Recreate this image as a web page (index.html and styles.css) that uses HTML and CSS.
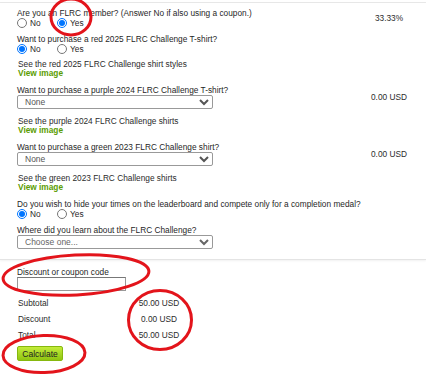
FILE: index.html
```html
<!DOCTYPE html>
<html lang="en">
<head>
    <meta charset="UTF-8">
    <title>FLRC Challenge Registration</title>
    <link rel="stylesheet" href="styles.css">
</head>
<body>
    <div class="page">
        <div class="options">
            <div class="field radio-field">
                <div class="field-main">
                    <div class="question">Are you an FLRC member? (Answer No if also using a coupon.)</div>
                    <div class="radios">
                        <label class="option"><input type="radio" name="member"> No</label>
                        <label class="option"><input type="radio" name="member" checked> Yes</label>
                    </div>
                </div>
                <div class="price">33.33%</div>
            </div>

            <div class="field radio-field">
                <div class="field-main">
                    <div class="question">Want to purchase a red 2025 FLRC Challenge T-shirt?</div>
                    <div class="radios">
                        <label class="option"><input type="radio" name="red" checked> No</label>
                        <label class="option"><input type="radio" name="red"> Yes</label>
                    </div>
                </div>
            </div>

            <div class="see">
                <div>See the red 2025 FLRC Challenge shirt styles</div>
                <a href="#" class="view">View image</a>
            </div>

            <div class="field select-field">
                <div class="field-main">
                    <div class="question">Want to purchase a purple 2024 FLRC Challenge T-shirt?</div>
                    <select><option>None</option></select>
                </div>
                <div class="price">0.00 USD</div>
            </div>

            <div class="see">
                <div>See the purple 2024 FLRC Challenge shirts</div>
                <a href="#" class="view">View image</a>
            </div>

            <div class="field select-field">
                <div class="field-main">
                    <div class="question">Want to purchase a green 2023 FLRC Challenge shirt?</div>
                    <select><option>None</option></select>
                </div>
                <div class="price">0.00 USD</div>
            </div>

            <div class="see">
                <div>See the green 2023 FLRC Challenge shirts</div>
                <a href="#" class="view">View image</a>
            </div>

            <div class="field radio-field">
                <div class="field-main">
                    <div class="question">Do you wish to hide your times on the leaderboard and compete only for a completion medal?</div>
                    <div class="radios">
                        <label class="option"><input type="radio" name="hide" checked> No</label>
                        <label class="option"><input type="radio" name="hide"> Yes</label>
                    </div>
                </div>
            </div>

            <div class="field">
                <div class="field-main">
                    <div class="question">Where did you learn about the FLRC Challenge?</div>
                    <select class="choose"><option>Choose one...</option></select>
                </div>
            </div>
        </div>

        <div class="summary">
            <div class="coupon">
                <div class="question">Discount or coupon code</div>
                <input type="text" class="coupon-input">
            </div>
            <div class="totals">
                <div>Subtotal</div><div class="amount">50.00 USD</div>
                <div>Discount</div><div class="amount">0.00 USD</div>
                <div>Total</div><div class="amount">50.00 USD</div>
            </div>
            <button class="calc">Calculate</button>
        </div>
    </div>

    <svg class="marks" width="426" height="375" viewBox="0 0 426 375">
        <ellipse cx="71" cy="17" rx="20" ry="18"/>
        <ellipse cx="76" cy="275" rx="73" ry="20" transform="rotate(-3 76 275)"/>
        <ellipse cx="160" cy="320" rx="31.5" ry="29.5"/>
        <ellipse cx="44" cy="354" rx="41" ry="18.5" transform="rotate(-2 44 354)"/>
    </svg>
</body>
</html>
```

FILE: styles.css
```css
body {
    margin: 0;
    font-family: "Liberation Sans", Arial, sans-serif;
    font-size: 8.3px;
    color: #2b2b2b;
    background: #fff;
}
.page {
    margin-top: 2px;
    border-top: 1px solid #e8e8e8;
}
.options {
    padding: 5px 11px 10px 17px;
    border-bottom: 1px solid #e4e4e4;
    box-shadow: 0 1px 2px rgba(0,0,0,0.06);
}
.field {
    display: flex;
    align-items: center;
}
.field-main {
    flex: 1;
}
.radio-field {
    margin-bottom: 6px;
}
.select-field {
    margin-bottom: 8px;
}
.question {
    line-height: 10px;
    color: #1f1f1f;
}
.radios {
    display: flex;
    line-height: 10px;
}
.option {
    display: flex;
    align-items: center;
    gap: 3px;
    width: 40px;
    color: #1f1f1f;
}
.option input {
    width: 10px;
    height: 10px;
    margin: 0;
}
.price {
    width: 52px;
    text-align: center;
}
.see {
    line-height: 9px;
    padding-left: 1px;
    margin-bottom: 7px;
}
.view {
    display: block;
    color: #5a9c00;
    font-weight: bold;
    text-decoration: none;
}
select {
    display: block;
    width: 196px;
    height: 14px;
    padding: 0 0 0 3px;
    font-family: inherit;
    font-size: 8.5px;
    color: #555;
    border: 1px solid #999;
    border-radius: 2px;
    background: #fff;
}
.choose {
    color: #666;
}
.summary {
    padding: 7px 17px 0 17px;
}
.coupon-input {
    display: block;
    width: 109px;
    height: 14px;
    box-sizing: border-box;
    margin: 0;
    border: 1px solid #999;
    border-top-color: #777;
}
.totals {
    display: grid;
    grid-template-columns: 105px 72px;
    line-height: 16px;
    margin-top: 4px;
    padding-left: 1px;
}
.amount {
    text-align: center;
}
.calc {
    margin-top: 3px;
    width: 46px;
    height: 15px;
    padding: 0;
    font-family: inherit;
    font-size: 8.5px;
    color: #222;
    background: linear-gradient(#c3ec3a, #8fc511);
    border: 1px solid #86b80e;
    border-radius: 2px;
}
.marks {
    position: absolute;
    top: 0;
    left: 0;
    pointer-events: none;
}
.marks ellipse {
    fill: none;
    stroke: #e3141b;
    stroke-width: 3;
}
```
